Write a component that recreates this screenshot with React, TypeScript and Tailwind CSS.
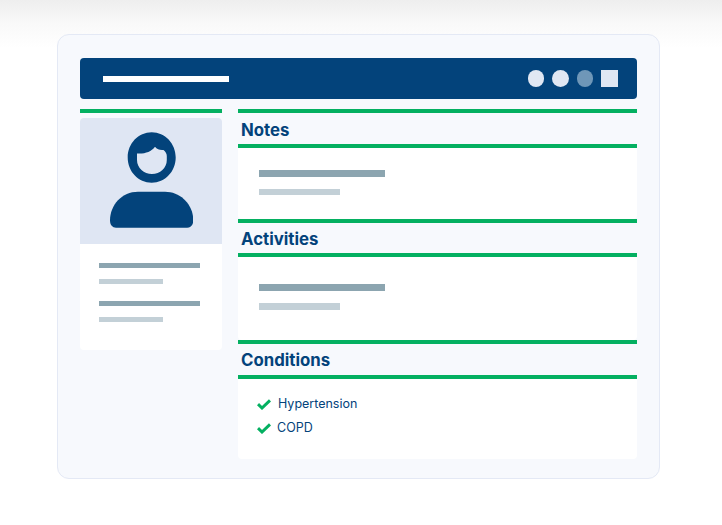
function Bars({ top, gap }: { top: string; gap: string }) {
  return (
    <div className={"flex flex-col " + top + " " + gap}>
      <div className="h-[6.6px] w-[126px] bg-[#8ca5b0]" />
      <div className="h-[6.6px] w-[81px] bg-[#c3d0d7]" />
    </div>
  );
}

function SideBars() {
  return (
    <div className="flex flex-col">
      <div className="h-[5px] w-[101px] bg-[#8ca5b0]" />
      <div className="mt-[11px] h-[5px] w-[64px] bg-[#c3d0d7]" />
    </div>
  );
}

function Green({ className = "" }: { className?: string }) {
  return <div className={"h-[4px] bg-[#04b061] " + className} />;
}

function Title({ children, h }: { children: string; h: string }) {
  return (
    <div className={"flex items-center pl-[3px] text-[16.8px] font-bold leading-none text-[#03437b] " + h}>
      {children}
    </div>
  );
}

function Check() {
  return (
    <svg width="14" height="11" viewBox="0 0 14 11" className="shrink-0">
      <path d="M1 5.2 L5 9 L13 1.4" fill="none" stroke="#04b061" strokeWidth="3" />
    </svg>
  );
}

function Person() {
  return (
    <svg width="84" height="96" viewBox="109 132 84 96">
      <path
        fillRule="evenodd"
        fill="#03437b"
        d="M151.7 132.3C165 132.3 175.7 143.5 175.7 157.5C175.7 171.5 165 182.7 151.7 182.7C138.4 182.7 127.7 171.5 127.7 157.5C127.7 143.5 138.4 132.3 151.7 132.3ZM137 153.5C145 154 151 152 155 146.8C157 149.5 160.5 150.5 163.5 150C165.5 151.5 166.8 153.5 166.8 156V160C166.8 168 160 174 152 174C144 174 137 168 137 160Z"
      />
      <path
        fill="#03437b"
        d="M138 191.8H165C181 191.8 193.3 205 193.3 220.5C193.3 225 190.5 227.7 187 227.7H116C112.5 227.7 110 225 110 220.5C110 205 122 191.8 138 191.8Z"
      />
    </svg>
  );
}

export default function App() {
  return (
    <div className="h-[525px] w-[722px] overflow-hidden bg-white font-['Inter',sans-serif]">
      <div className="h-[48px] bg-gradient-to-b from-[#eeeeee] via-[#f9f9f9] via-50% to-white" />
      <div className="-mt-[14px] ml-[57px] flex h-[445px] w-[603px] flex-col rounded-[12px] border border-[#e4e9f5] bg-[#f7f9fd] pl-[22px] pr-[22px] pt-[23px]">
        <div className="flex h-[41px] w-[557px] items-center justify-between rounded-[4px] bg-[#03437b] pl-[22.6px] pr-[19px]">
          <div className="h-[6px] w-[126.4px] bg-white" />
          <div className="flex items-center gap-[8px]">
            <div className="h-[16.5px] w-[16.5px] rounded-full bg-[#e0e7f3]" />
            <div className="h-[16.5px] w-[16.5px] rounded-full bg-[#e0e7f3]" />
            <div className="h-[16.5px] w-[16.5px] rounded-full bg-[#6f97b8]" />
            <div className="h-[17px] w-[17px] bg-[#e0e7f3]" />
          </div>
        </div>

        <div className="mt-[10px] flex w-[557px] gap-[16px]">
          <div className="w-[142px]">
            <Green />
            <div className="mt-[5px] rounded-[4px] bg-white">
              <div className="flex h-[126px] justify-center rounded-t-[4px] bg-[#dfe6f3] pt-[14px]">
                <Person />
              </div>
              <div className="flex h-[106px] flex-col gap-[17px] pl-[19px] pt-[19px]">
                <SideBars />
                <SideBars />
              </div>
            </div>
          </div>

          <div className="w-[399px]">
            <Green />
            <Title h="h-[31px] pt-[3px]">Notes</Title>
            <Green />
            <div className="h-[71px] rounded-b-[4px] bg-white pl-[21px]">
              <Bars top="pt-[22px]" gap="gap-[12px]" />
            </div>
            <Green />
            <Title h="h-[30px] pt-[3px]">Activities</Title>
            <Green />
            <div className="h-[83px] rounded-b-[4px] bg-white pl-[21px]">
              <Bars top="pt-[27px]" gap="gap-[12.4px]" />
            </div>
            <Green />
            <Title h="h-[31px] pt-[1px]">Conditions</Title>
            <Green />
            <div className="flex h-[80px] flex-col gap-[6px] rounded-b-[4px] bg-white pl-[19px] pt-[16.4px] text-[12.5px] leading-[18px] text-[#03437b]">
              <div className="flex items-center gap-[7px]">
                <Check />
                <span>Hypertension</span>
              </div>
              <div className="flex items-center gap-[6px]">
                <Check />
                <span>COPD</span>
              </div>
            </div>
          </div>
        </div>
      </div>
    </div>
  );
}
